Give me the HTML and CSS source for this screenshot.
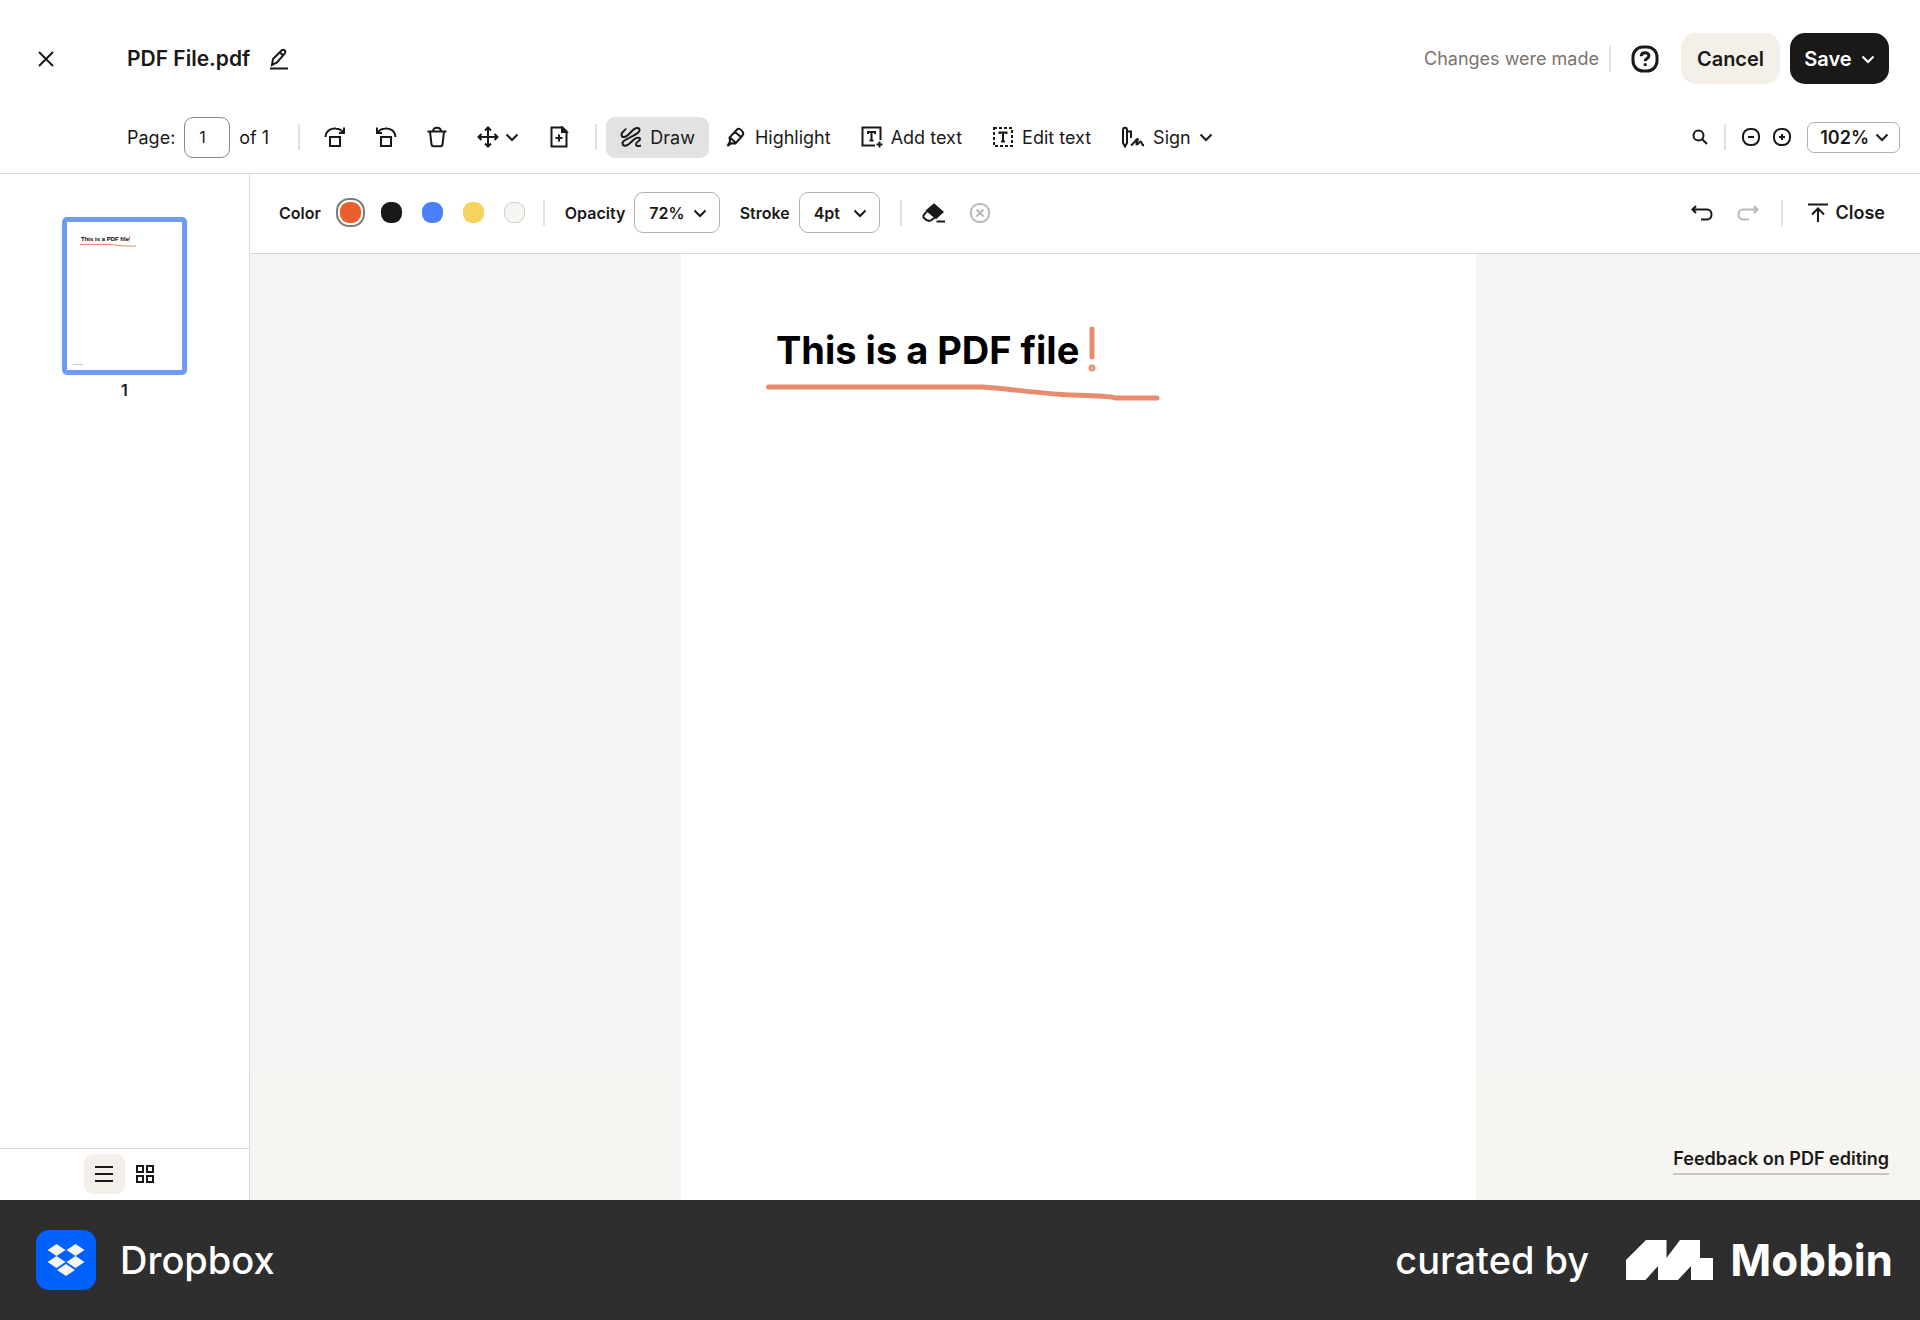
FILE: index.html
```html
<!DOCTYPE html>
<html lang="en">
<head>
<meta charset="utf-8">
<meta name="viewport" content="width=device-width, initial-scale=1">
<title>PDF File.pdf</title>
<link rel="stylesheet" href="styles.css">
</head>
<body>
<svg class="sprite" aria-hidden="true">
  <symbol id="chevron" viewBox="0 0 14 14"><path d="M1.500 4.500 7 10l5.500-5.500"/></symbol>
</svg>
<div class="app">
  <header class="header">
    <div class="titlebar">
      <button class="icon-btn dismiss" aria-label="Close file"><svg viewBox="0 0 16 16" width="16" height="16"><path d="M1 1l14 14M15 1 1 15"/></svg></button>
      <h1 class="filename">PDF File.pdf</h1>
      <button class="icon-btn rename" aria-label="Rename"><svg viewBox="0 0 20 22" width="20" height="22"><path d="M3 17l1-6 8.500-8.500c2-2 5 .500 3.300 2.900L8 14.500zM11 4.500l3.500 3.200"/><path d="M1 20.500h18"/></svg></button>
      <span class="status">Changes were made</span>
      <span class="divider"></span>
      <button class="icon-btn help" aria-label="Help"><svg class="heavy" viewBox="0 0 28 28" width="28" height="28"><rect x="2" y="2" width="24" height="24" rx="10"/><path d="M10.300 11.200c0-4.700 7.600-4.600 7.600-.400 0 2.800-3.700 2.600-3.700 5.400"/><path d="M14.200 18.300v2.700"/></svg></button>
      <button class="btn btn-cancel">Cancel</button>
      <button class="btn btn-save">Save <svg width="14" height="14"><use href="#chevron"/></svg></button>
    </div>
    <div class="toolbar">
      <label class="page-label" for="page">Page:</label>
      <input class="page-input" id="page" type="text" value="1">
      <span class="page-total">of 1</span>
      <span class="divider"></span>
      <div class="page-tools">
        <button class="icon-btn" aria-label="Rotate right"><svg viewBox="0 0 22 22" width="22" height="22"><path d="M6 11h10v9H6z"/><path d="M1.500 11C2 4 8 2 12 2.500c3 .300 5.500 1.500 7.500 4M20 1.500v5.500h-5"/></svg></button>
        <button class="icon-btn" aria-label="Rotate left"><svg viewBox="0 0 22 22" width="22" height="22"><path d="M6 11h10v9H6z"/><path d="M20.500 11C20 4 14 2 10 2.500c-3 .300-5.500 1.500-7.500 4M2 1.500v5.500h5"/></svg></button>
        <button class="icon-btn" aria-label="Delete page"><svg viewBox="0 0 22 22" width="22" height="22"><path d="M1.500 5.500h19M7 5.500c0-5 8-5 8 0M4 5.500l1.500 13c.200 1.300.700 1.800 2 1.800h7c1.300 0 1.800-.500 2-1.800L18 5.500"/></svg></button>
        <button class="icon-btn move" aria-label="Move page"><svg viewBox="0 0 22 22" width="22" height="22"><path d="M11 1.500v19M1.500 11h19M8 4.500l3-3 3 3M8 17.500l3 3 3-3M4.500 8l-3 3 3 3M17.500 8l3 3-3 3"/></svg><svg width="14" height="14"><use href="#chevron"/></svg></button>
        <button class="icon-btn" aria-label="Insert page"><svg viewBox="0 0 22 22" width="22" height="22"><path d="M3.500 1.500h11l4 4v15h-15z"/><path d="M14 1.500v4.500h4.500z" fill="currentColor"/><path d="M11 8.500v7M7.500 12h7"/></svg></button>
      </div>
      <span class="divider"></span>
      <div class="modes">
        <button class="mode active"><svg viewBox="0 0 22 22" width="22" height="22"><path d="M6 2.500C5 5 1 6 1.500 9s4 2.500 6.500 0l5-5c3-3 7-2.500 6.500.500S14 9 10 11.500s-8 3-7.500 6 4 2.500 6.500.500l5-4.500c3-2.500 6.500-2 6 0s-4.500 2.500-4 5 3 1.500 5 1"/></svg>Draw</button>
        <button class="mode"><svg viewBox="0 0 22 22" width="22" height="22"><path d="M2.500 20l2.500-4.500-.500-4L12 3.500c2.200-2.200 8.200 2.500 5.500 6L10.500 17.500l-4-.300zM10 6l6 5M5 11.500l5.500 5"/></svg>Highlight</button>
        <button class="mode"><svg viewBox="0 0 22 22" width="22" height="22"><path d="M14 19.500H1.500v-18h18V14M7 8V6h7v2M10.500 6v8.500M8.500 14.500h4M18.500 15.500v6M15.500 18.500h6"/></svg>Add text</button>
        <button class="mode"><svg viewBox="0 0 22 22" width="22" height="22"><path stroke-dasharray="3 2" d="M2 2h18v18H2z"/><path d="M7.500 8V6.500h7V8M11 6.500v9M9 15.500h4"/></svg>Edit text</button>
        <button class="mode"><svg viewBox="0 0 24 22" width="24" height="22"><path d="M2 6v11l2 3.500L6 17V4c0-3-4-3-4 0v3M6 5.500h4V12M10 19.500c3-2 5-6 6.500-6.500s-2.500 5.500-.500 5.500 2-3 3.500-3 .500 3.500 3.500 4"/></svg>Sign <svg width="14" height="14"><use href="#chevron"/></svg></button>
      </div>
      <div class="zoom">
        <button class="icon-btn" aria-label="Search"><svg viewBox="0 0 16 16" width="16" height="16"><circle cx="6.500" cy="6.500" r="5"/><path d="M10.200 10.200 15 15"/></svg></button>
        <span class="divider"></span>
        <button class="icon-btn zoom-out" aria-label="Zoom out"><svg viewBox="0 0 18 18" width="18" height="18"><rect x="1" y="1" width="16" height="16" rx="7"/><path d="M6 9h6"/></svg></button>
        <button class="icon-btn" aria-label="Zoom in"><svg viewBox="0 0 18 18" width="18" height="18"><rect x="1" y="1" width="16" height="16" rx="7"/><path d="M6 9h6M9 6v6"/></svg></button>
        <button class="picker picker-zoom">102% <svg width="14" height="14"><use href="#chevron"/></svg></button>
      </div>
    </div>
  </header>
  <main class="workspace">
    <aside class="sidebar">
      <div class="thumbs">
        <button class="thumb" aria-label="Page 1">
          <span class="thumb-title">This is a PDF file</span>
          <svg class="thumb-ink" viewBox="0 0 115 148"><path d="M13 22.500h30L57 24h12M62.500 14v4M62.500 19v1"/></svg>
          <span class="thumb-foot"></span>
        </button>
        <span class="thumb-number">1</span>
      </div>
      <div class="views">
        <button class="view active" aria-label="List view"><svg viewBox="0 0 18 18" width="18" height="18"><path d="M0 2h18M0 9h18M0 16h18"/></svg></button>
        <button class="view" aria-label="Grid view"><svg viewBox="0 0 20 20" width="20" height="20"><path d="M2 2h6v6H2zM12 2h6v6h-6zM2 12h6v6H2zM12 12h6v6h-6z"/></svg></button>
      </div>
    </aside>
    <section class="editor">
      <div class="drawbar">
        <span class="caption">Color</span>
        <div class="swatches" role="group" aria-label="Color">
          <button class="swatch orange selected" aria-label="Orange"></button>
          <button class="swatch black" aria-label="Black"></button>
          <button class="swatch blue" aria-label="Blue"></button>
          <button class="swatch yellow" aria-label="Yellow"></button>
          <button class="swatch white" aria-label="White"></button>
        </div>
        <span class="divider"></span>
        <span class="caption">Opacity</span>
        <button class="picker">72% <svg width="14" height="14"><use href="#chevron"/></svg></button>
        <span class="caption caption-stroke">Stroke</span>
        <button class="picker">4pt <svg width="14" height="14"><use href="#chevron"/></svg></button>
        <span class="divider"></span>
        <button class="icon-btn" aria-label="Eraser"><svg viewBox="0 0 24 20" width="24" height="20"><path fill="currentColor" d="M12 1.500 20.500 9 14 15 5 7.500z"/><path d="M5 8.500c-4 3.500-4.500 5-2.500 7s5 3 7 1.500l4-3M14.500 18.500H23"/></svg></button>
        <button class="icon-btn faint clear" aria-label="Clear drawing"><svg viewBox="0 0 22 22" width="22" height="22"><rect x="2" y="2" width="18" height="18" rx="8"/><path d="M7.500 7.500l7 7M14.500 7.500l-7 7"/></svg></button>
        <div class="history">
          <button class="icon-btn" aria-label="Undo"><svg viewBox="0 0 22 16" width="22" height="16"><path d="M1.500 4.500H16c6 0 6 10 0 10h-6M5 1 1.500 4.500 5 8"/></svg></button>
          <button class="icon-btn faint redo" aria-label="Redo"><svg viewBox="0 0 22 16" width="22" height="16"><path d="M20.500 4.500H6c-6 0-6 10 0 10h6M17 1l3.500 3.500L17 8"/></svg></button>
          <span class="divider"></span>
          <button class="close"><svg viewBox="0 0 20 20" width="20" height="20"><path d="M0 1.500h20M10 19V6M4 11.500l6-6 6 6"/></svg>Close</button>
        </div>
      </div>
      <div class="canvas">
        <article class="sheet">
          <h2 class="sheet-title">This is a PDF file</h2>
          <svg class="ink" viewBox="0 0 400 90" width="400" height="90"><path d="M8.500 67H222c22 1 60 7 90 8 26 1 40 1 43 3h42M332 9v28"/><circle cx="332" cy="48" r="1" fill="currentColor"/></svg>
        </article>
        <a class="feedback" href="#feedback">Feedback on PDF editing</a>
      </div>
    </section>
  </main>
  <footer class="footer">
    <svg class="app-logo" viewBox="0 0 60 60" width="60" height="60"><rect width="60" height="60" rx="13" fill="#0061fe"/><path fill="#f7f5f2" d="M20.500 14l9 6-9 6-9-6zM39.500 14l9 6-9 6-9-6zM20.500 26l9 6-9 6-9-6zM39.500 26l9 6-9 6-9-6zM30 34l9 6-9 6-9-6z"/></svg>
    <span class="app-name">Dropbox</span>
    <span class="curated">curated by</span>
    <svg class="mobbin-logo" viewBox="0 0 87 40" width="87" height="40"><path fill="#fff" d="M0 20 20 0h20.500v18L54 0h20v18h13v22H65V26L52 40H32V26L19.500 40H0z"/></svg>
    <span class="mobbin">Mobbin</span>
  </footer>
</div>
</body>
</html>
```

FILE: styles.css
```css
* { box-sizing: border-box; }

body {
  margin: 0;
  color: #1a1918;
  background: #fff;
  font-family: "Inter", "Liberation Sans", sans-serif;
  font-size: 18px;
}

button, input { font: inherit; color: inherit; }

button {
  display: flex;
  align-items: center;
  flex: none;
  padding: 0;
  border: 0;
  background: none;
  white-space: nowrap;
  cursor: pointer;
}

svg {
  display: block;
  flex: none;
  fill: none;
  stroke: currentColor;
  stroke-width: 2;
}

.sprite { position: absolute; width: 0; height: 0; }
.heavy { stroke-width: 3; }

.app { display: flex; flex-direction: column; min-height: 100vh; }

.divider { flex: none; width: 2px; height: 26px; background: #e3e2e0; }

/* Header */
.header { border-bottom: 1px solid #d9d8d6; }

.titlebar {
  display: flex;
  align-items: center;
  height: 117px;
  padding: 0 31px 0 38px;
}

.dismiss { width: 89px; }
.filename { margin: 0; font-size: 21px; font-weight: 600; }
.rename { margin-left: 19px; }
.status { margin: 0 10px 0 auto; color: #7a746d; }
.help { margin: 0 22px 0 20px; }

.btn {
  justify-content: center;
  gap: 9px;
  min-width: 99px;
  height: 51px;
  border-radius: 15px;
  font-size: 20px;
  font-weight: 600;
}

.btn-cancel { margin-right: 10px; background: #f4efe8; }
.btn-save { color: #fff; background: #1a1918; }

.toolbar {
  display: flex;
  align-items: center;
  height: 56px;
  padding: 0 20px 16px 127px;
}

.page-label, .page-total { flex: none; }

.page-input {
  width: 46px;
  height: 41px;
  margin: 0 9px;
  padding: 0 0 0 14px;
  border: 1px solid #8c8882;
  border-radius: 9px;
  font-size: 16px;
}

.page-total { width: 59px; }
.page-tools { display: flex; align-items: center; gap: 29px; margin: 0 25px 0 24px; }
.move { gap: 6px; }
.modes { display: flex; align-items: center; gap: 2px; margin-left: 9px; }

.mode {
  gap: 8px;
  height: 41px;
  padding: 0 14px;
  border-radius: 9px;
}

.mode.active { background: #e2e2e2; }
.zoom { display: flex; align-items: center; margin-left: auto; }
.zoom .divider { margin: 0 16px; }
.zoom-out { margin-right: 13px; }

.picker {
  justify-content: space-between;
  gap: 8px;
  min-width: 81px;
  height: 41px;
  padding: 0 12px 0 14px;
  border: 1px solid #b5b2ad;
  border-radius: 9px;
  font-size: 16px;
  font-weight: 600;
}

.picker-zoom { gap: 6px; height: 31px; margin-left: 16px; padding: 0 10px 0 12px; border-radius: 7px; font-size: 18px; }

/* Workspace */
.workspace { display: flex; flex: 1; }

.sidebar {
  display: flex;
  flex: none;
  flex-direction: column;
  width: 250px;
  border-right: 1px solid #d9d8d6;
}

.thumbs {
  display: flex;
  flex: 1;
  flex-direction: column;
  align-items: center;
  gap: 5px;
  padding-top: 43px;
}

.thumb {
  position: relative;
  align-items: flex-start;
  width: 125px;
  height: 158px;
  padding: 14px;
  border: 5px solid #6f9bf5;
  border-radius: 5px;
}

.thumb-title { color: #000; font-family: "Liberation Sans", sans-serif; font-size: 6px; font-weight: 700; }
.thumb-ink { position: absolute; inset: 0; width: 115px; height: 148px; color: #e98c6d; stroke-width: 1; }
.thumb-foot { position: absolute; bottom: 5px; left: 6px; width: 10px; height: 1px; background: #ccc; }
.thumb-number { font-size: 16px; font-weight: 600; line-height: 20px; }

.views {
  display: flex;
  justify-content: center;
  height: 52px;
  padding: 5px 0 6px;
  border-top: 1px solid #d9d8d6;
}

.view { justify-content: center; width: 41px; border-radius: 9px; }
.view.active { background: #f4efe8; }

.editor { display: flex; flex: 1; flex-direction: column; min-width: 0; }

.drawbar {
  display: flex;
  align-items: center;
  height: 80px;
  padding: 0 35px 2px 29px;
  border-bottom: 1px solid #d9d8d6;
}

.caption { margin-right: 9px; font-size: 16px; font-weight: 600; }
.caption-stroke { margin-left: 20px; }
.swatches { display: flex; align-items: center; gap: 20px; margin: 0 18px 0 10px; }
.swatch { width: 21px; height: 21px; border-radius: 9px; }
.swatch.selected { outline: 2px solid #817c73; outline-offset: 2px; }
.orange { background: #eb5f2e; }
.black { background: #1a1918; }
.blue { background: #4a80fa; }
.yellow { background: #f5d35e; }
.white { border: 1px solid #d0cec9; background: #f7f5f2; }
.drawbar > .divider { margin: 0 20px; }
.drawbar > .swatches + .divider { margin-left: 0; }
.faint { color: #bbb9b6; }
.clear { margin-left: 23px; }
.history { display: flex; align-items: center; margin-left: auto; }
.redo { margin: 0 22px 0 24px; }
.close { gap: 8px; margin-left: 25px; font-weight: 600; }

.canvas {
  position: relative;
  flex: 1;
  padding: 0 444px 0 431px;
  background: linear-gradient(#f5f4f2 820px, #f7f5f1 820px);
}

.sheet { position: relative; height: 100%; padding: 72px 95px; background: #fff; }
.sheet-title { margin: 0; color: #000; font-size: 38px; font-weight: 700; line-height: 48px; white-space: nowrap; }
.ink {
  position: absolute;
  top: 66px;
  left: 79px;
  color: #e98c6d;
  stroke-width: 5;
  stroke-linecap: round;
  stroke-linejoin: round;
}

.feedback {
  position: absolute;
  right: 31px;
  bottom: 25px;
  padding-bottom: 2px;
  border-bottom: 2px solid #c9c7c0;
  color: inherit;
  font-weight: 600;
  line-height: 24px;
  text-decoration: none;
}

/* Footer */
.footer {
  display: flex;
  align-items: center;
  height: 120px;
  padding: 0 27px 0 36px;
  color: #fff;
  background: #2e2e2e;
  font-size: 38px;
  font-weight: 500;
}

.footer svg { stroke: none; }
.app-name { margin-left: 24px; }
.curated { margin: 0 37px 0 auto; }
.mobbin { margin-left: 17px; font-size: 44px; font-weight: 700; }
```
